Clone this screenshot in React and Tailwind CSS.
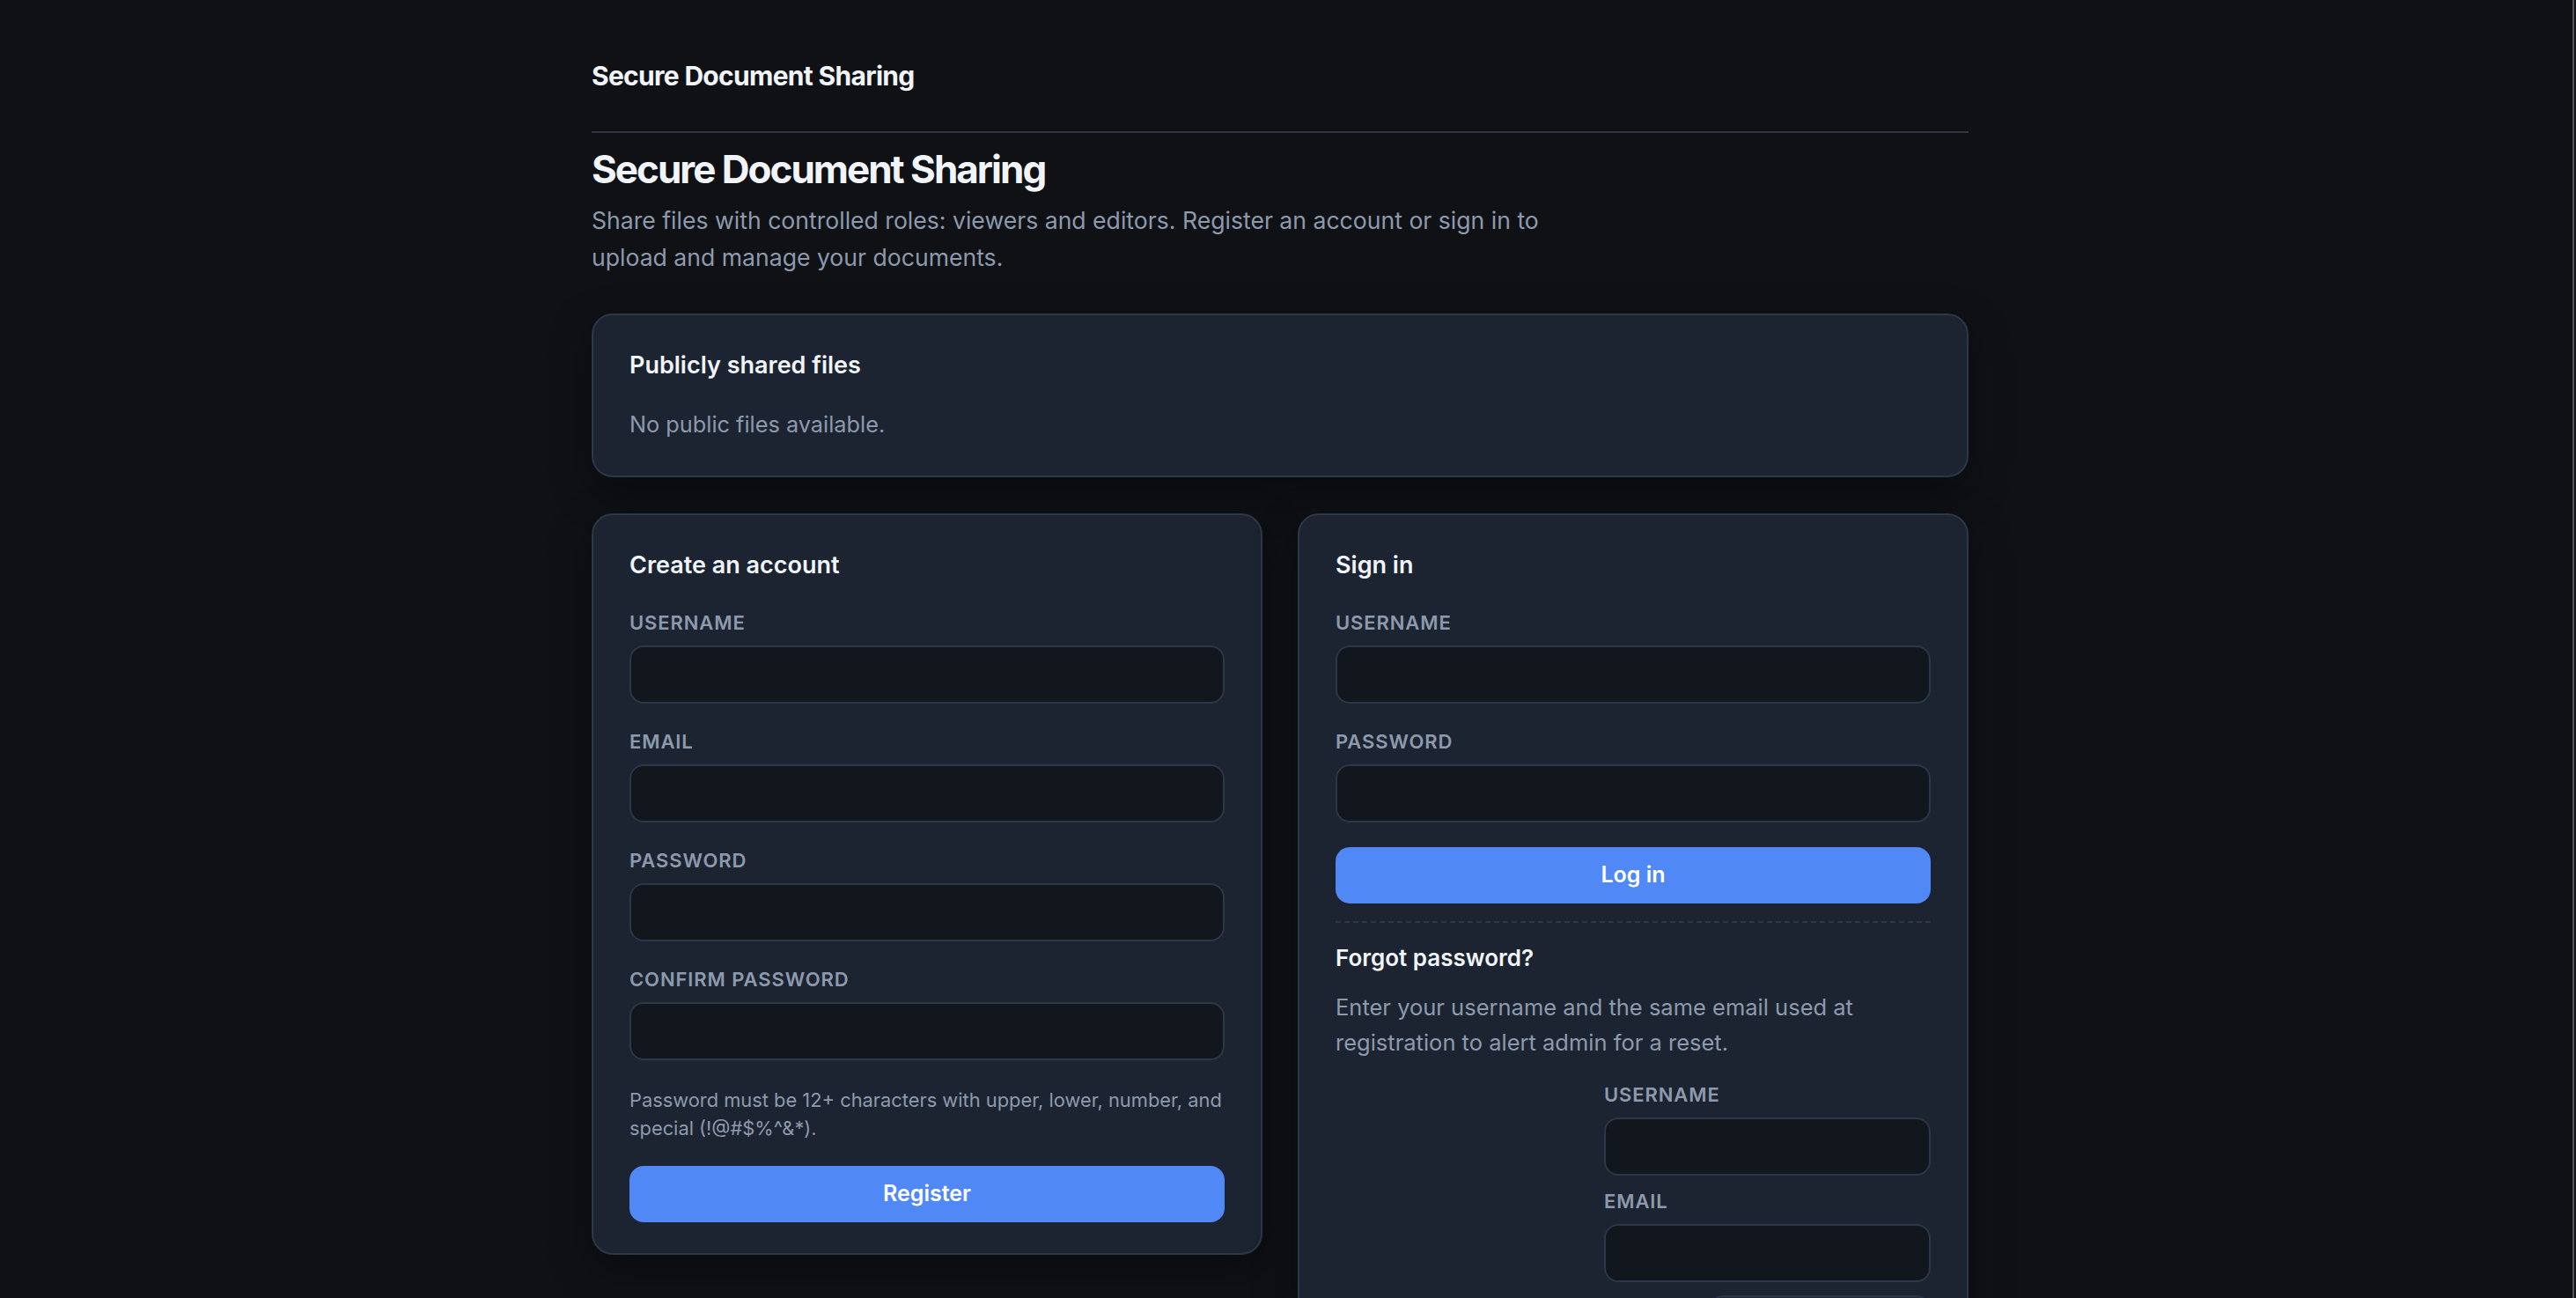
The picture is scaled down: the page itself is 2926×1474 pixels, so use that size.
const Field = ({ label }) => (
  <div className="flex flex-col">
    <label className="text-[22px] leading-[28px] font-semibold tracking-[0.9px] text-[#8d9aae] uppercase mb-[12px]">{label}</label>
    <input className="block w-full h-[66px] rounded-[16px] border-2 border-[#2c3748] bg-[#12171e]" />
  </div>
);

const Button = ({ children }) => (
  <button className="w-full h-[64px] rounded-[16px] bg-[#5088f5] text-white text-[25px] font-semibold">{children}</button>
);

const cardClass = "rounded-[24px] border-2 border-[#2c3748] bg-[#1c2431] shadow-[0_16px_48px_rgba(0,0,0,0.35)] px-[41px] pt-[35px]";

export default function App() {
  return (
    <div className="flex h-[1474px] overflow-hidden bg-[#111214] font-['Inter',sans-serif]">
      <main className="w-[2922px] bg-[#0f1115]">
        <div className="w-[1564px] ml-[672px]">
          <header className="h-[151px] pt-[64px] border-b-2 border-[#2c3748]">
            <div className="text-[30px] leading-[44px] font-bold tracking-[-0.7px] text-[#f1f4f9]">Secure Document Sharing</div>
          </header>
          <h1 className="mt-[14px] text-[44px] leading-[54px] font-bold tracking-[-2px] text-[#f1f4f9]">Secure Document Sharing</h1>
          <p className="mt-[10px] w-[1120px] text-[26.6px] leading-[42px] text-[#8d9aae]">
            Share files with controlled roles: viewers and editors. Register an account or sign in to upload and manage your documents.
          </p>

          <section className={`mt-[43px] h-[186px] ${cardClass}`}>
            <h2 className="text-[27px] leading-[44px] font-semibold text-[#f1f4f9]">Publicly shared files</h2>
            <p className="mt-[25px] text-[25.3px] leading-[40px] text-[#8d9aae]">No public files available.</p>
          </section>

          <div className="mt-[41px] grid grid-cols-2 gap-[40px] items-start">
            <section className={`${cardClass} pb-[35px]`}>
              <h2 className="text-[27px] leading-[44px] font-semibold text-[#f1f4f9] mb-[29px]">Create an account</h2>
              <div className="flex flex-col gap-[29px]">
                <Field label="Username" />
                <Field label="Email" />
                <Field label="Password" />
                <Field label="Confirm Password" />
              </div>
              <p className="mt-[29px] text-[21.85px] leading-[32px] text-[#8d9aae]">
                Password must be 12+ characters with upper, lower, number, and special (!@#$%^&amp;*).
              </p>
              <div className="mt-[27px]"><Button>Register</Button></div>
            </section>

            <section className={`${cardClass} pb-[35px]`}>
              <h2 className="text-[27px] leading-[44px] font-semibold text-[#f1f4f9] mb-[29px]">Sign in</h2>
              <div className="flex flex-col gap-[29px]">
                <Field label="Username" />
                <Field label="Password" />
              </div>
              <div className="mt-[28px]"><Button>Log in</Button></div>
              <div className="mt-[20px] border-t-2 border-dashed border-[#2c3748] pt-[20px]">
                <h3 className="text-[26px] leading-[40px] font-semibold text-[#f1f4f9]">Forgot password?</h3>
                <p className="mt-[16px] text-[25.5px] leading-[40px] text-[#8d9aae]">
                  Enter your username and the same email used at registration to alert admin for a reset.
                </p>
                <div className="mt-[25px] ml-auto w-[371px] flex flex-col gap-[15px]">
                  <Field label="Username" />
                  <Field label="Email" />
                  <button className="self-end w-[252px] h-[64px] rounded-[16px] border-2 border-[#2c3748]"></button>
                </div>
              </div>
            </section>
          </div>
        </div>
      </main>
      <div className="w-[2px] bg-[#555555]"></div>
    </div>
  );
}
